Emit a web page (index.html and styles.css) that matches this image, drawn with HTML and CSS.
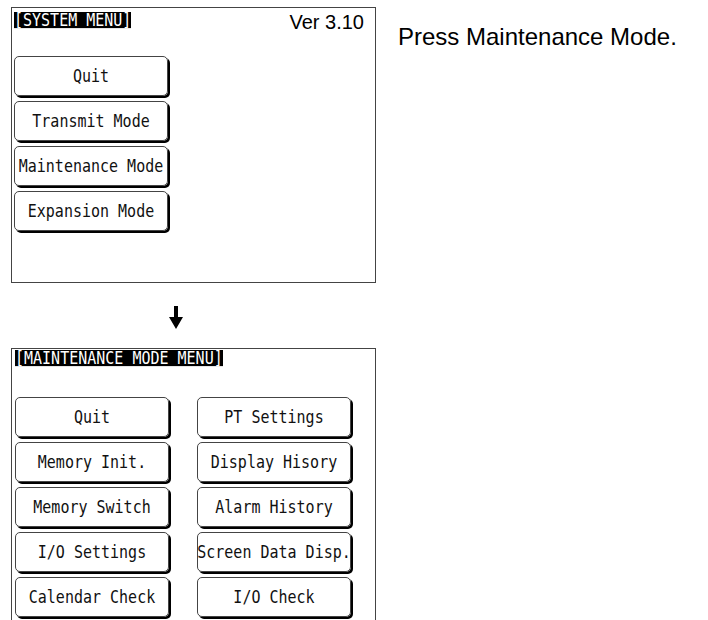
FILE: index.html
```html
<!DOCTYPE html>
<html>
<head>
<meta charset="utf-8">
<link rel="stylesheet" href="styles.css">
</head>
<body>
<div class="page">
  <div class="screens">
    <div class="panel panel-top">
      <div class="head">
        <span class="title">[SYSTEM MENU]</span>
        <span class="ver">Ver 3.10</span>
      </div>
      <div class="btn-list">
        <div class="btn"><span>Quit</span></div>
        <div class="btn"><span>Transmit Mode</span></div>
        <div class="btn"><span>Maintenance Mode</span></div>
        <div class="btn"><span>Expansion Mode</span></div>
      </div>
    </div>
    <div class="arrow">
      <svg width="14" height="23" viewBox="0 0 14 23"><path d="M5 0 H9 V11 H14 L7 23 L0 11 H5 Z" fill="#000"/></svg>
    </div>
    <div class="panel panel-bottom">
      <div class="head">
        <span class="title">[MAINTENANCE MODE MENU]</span>
      </div>
      <div class="btn-grid">
        <div class="btn"><span>Quit</span></div>
        <div class="btn"><span>PT Settings</span></div>
        <div class="btn"><span>Memory Init.</span></div>
        <div class="btn"><span>Display Hisory</span></div>
        <div class="btn"><span>Memory Switch</span></div>
        <div class="btn"><span>Alarm History</span></div>
        <div class="btn"><span>I/O Settings</span></div>
        <div class="btn"><span>Screen Data Disp.</span></div>
        <div class="btn"><span>Calendar Check</span></div>
        <div class="btn"><span>I/O Check</span></div>
      </div>
    </div>
  </div>
  <p class="note">Press Maintenance Mode.</p>
</div>
</body>
</html>
```
FILE: styles.css
```css
html, body {
  margin: 0;
  padding: 0;
  background: #fff;
  overflow: hidden;
}
.page {
  display: flex;
  align-items: flex-start;
  padding: 7px 0 0 11px;
  font-family: "Liberation Sans", Arial, sans-serif;
  color: #000;
}
.screens {
  width: 365px;
  display: flex;
  flex-direction: column;
}
.panel {
  box-sizing: border-box;
  border: 1px solid #444;
}
.panel-top {
  height: 276px;
  padding: 4px 0 0 2px;
}
.panel-bottom {
  border-bottom: none;
  padding: 1px 0 8px 3px;
}
.head {
  display: flex;
  justify-content: space-between;
  align-items: flex-start;
  height: 16px;
}
.title {
  font-family: "DejaVu Sans Mono", monospace;
  font-size: 15px;
  line-height: 14px;
  height: 14px;
  background: #000;
  color: #fff;
  white-space: pre;
  transform: scaleY(1.15);
  transform-origin: top left;
}
.ver {
  font-size: 20px;
  line-height: 22px;
  margin: -1px 11px 0 0;
}
.btn-list {
  display: flex;
  flex-direction: column;
  gap: 5px;
  margin-top: 28px;
}
.btn-grid {
  display: grid;
  grid-template-columns: 154px 154px;
  column-gap: 28px;
  row-gap: 5px;
  margin-top: 31px;
}
.btn {
  box-sizing: border-box;
  width: 154px;
  height: 40px;
  border: 1px solid #444;
  border-radius: 5px;
  box-shadow: 2px 2px 0 #000;
  display: flex;
  align-items: center;
  justify-content: center;
  font-family: "DejaVu Sans Mono", monospace;
  font-size: 15px;
  color: #111;
  white-space: pre;
}
.btn span {
  display: inline-block;
  transform: scaleY(1.15);
}
.arrow {
  margin: 23px 0 19px 158px;
  height: 23px;
  line-height: 0;
}
.note {
  margin: 16px 0 0 22px;
  font-size: 24px;
  line-height: 28px;
}
```
